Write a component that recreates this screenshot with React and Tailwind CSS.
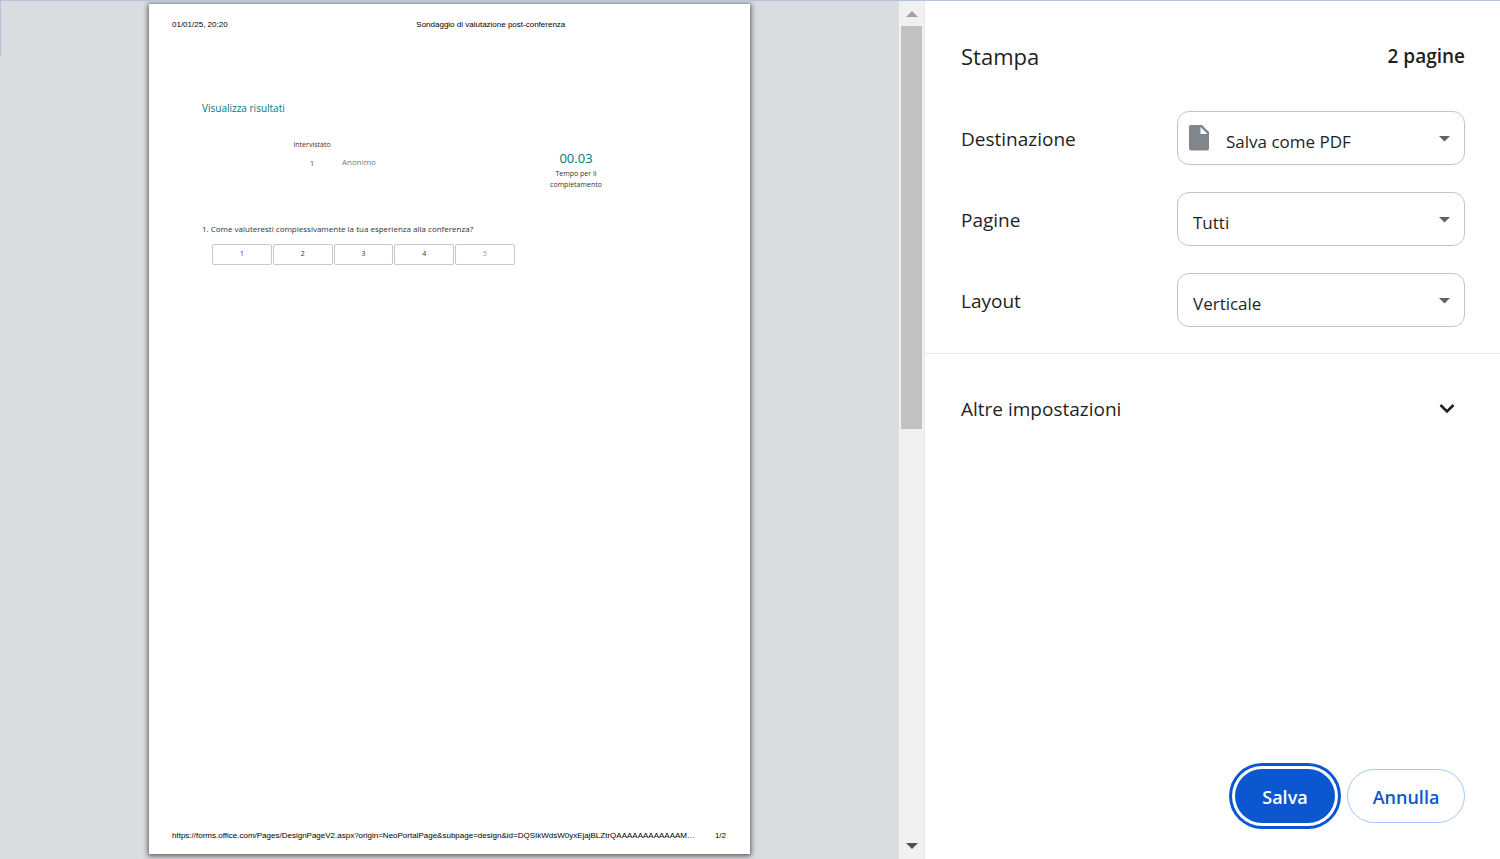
import React, { useState } from "react";

const ratings = ["1", "2", "3", "4", "5"];

const FileIcon = () => (
  <svg width="20" height="26" viewBox="0 0 20 26" fill="#80868b">
    <path
      fillRule="evenodd"
      d="M2 0H13L20 7V23.500Q20 25.500 18 25.500H2Q0 25.500 0 23.500V2Q0 0 2 0ZM11.500 2V9H18.500Z"
    />
  </svg>
);

const Field = ({ id, label, options, icon }) => {
  const [value, setValue] = useState(options[0]);

  return (
    <div className="flex items-center justify-between">
      <label htmlFor={id} className="pt-[2px] text-[19px] leading-7">
        {label}
      </label>
      <div className="relative w-72">
        <select
          id={id}
          value={value}
          onChange={(e) => setValue(e.target.value)}
          className={
            icon
              ? "block h-[54px] w-full appearance-none rounded-xl border border-[#c4c4c4] bg-white pt-[7px] pr-10 pl-12 text-[17px]"
              : "block h-[54px] w-full appearance-none rounded-xl border border-[#c4c4c4] bg-white pt-[7px] pr-10 pl-[15px] text-[17px]"
          }
        >
          {options.map((option) => (
            <option key={option}>{option}</option>
          ))}
        </select>
        {icon ? (
          <div className="pointer-events-none absolute top-[14px] left-3">
            {icon}
          </div>
        ) : null}
        <svg
          className="pointer-events-none absolute top-[25px] right-[15px]"
          width="11"
          height="6"
          viewBox="0 0 11 6"
        >
          <path d="M0 0H11L5.500 5.500Z" fill="#5f6368" />
        </svg>
      </div>
    </div>
  );
};

const Paper = () => (
  <article className="flex w-[601px] flex-col bg-white shadow-[0_1px_5px_1px_rgba(0,0,0,0.6)]">
    <header className="flex gap-1 pt-[15px] pl-[23px] font-['Liberation_Sans',sans-serif] text-[8px] leading-3 text-black">
      <span>01/01/25, 20:20</span>
      <span className="flex-1 text-center">
        Sondaggio di valutazione post-conferenza
      </span>
    </header>
    <div className="flex-1 px-[53px] pt-[69px] text-[#333333]">
      <h2 className="text-[10px] leading-4 text-[#03787c]">
        Visualizza risultati
      </h2>
      <div className="mt-6 flex justify-between pr-[85px] pl-20">
        <div className="flex">
          <div className="w-[60px] text-center">
            <p className="text-[7px] leading-[10px]">Intervistato</p>
            <p className="mt-2 text-[8px] leading-[10px] text-[#666666]">1</p>
          </div>
          <p className="mt-4 text-[8px] leading-3 text-[#777777]">Anonimo</p>
        </div>
        <div className="mt-2 w-[72px] text-center">
          <p className="text-[13px] leading-5 text-[#03787c]">00.03</p>
          <p className="text-[7px] leading-[11px]">
            Tempo per il completamento
          </p>
        </div>
      </div>
      <div className="mt-[31px]">
        <p className="text-[8px] leading-4">
          1. Come valuteresti complessivamente la tua esperienza alla
          conferenza?
        </p>
        <div className="mt-[7px] ml-[10px] grid w-[303px] grid-cols-5 gap-px">
          {ratings.map((rating) => (
            <button
              key={rating}
              type="button"
              className={
                rating === "5"
                  ? "h-[21px] rounded-[2px] border border-[#c8c8c8] text-[7px] text-[#999999]"
                  : "h-[21px] rounded-[2px] border border-[#c8c8c8] text-[7px] text-[#333333]"
              }
            >
              {rating}
            </button>
          ))}
        </div>
      </div>
    </div>
    <footer className="flex justify-between pr-6 pb-3 pl-[23px] font-['Liberation_Sans',sans-serif] text-[8px] leading-3 text-black">
      <span>
        https://forms.office.com/Pages/DesignPageV2.aspx?origin=NeoPortalPage&amp;subpage=design&amp;id=DQSIkWdsW0yxEjajBLZtrQAAAAAAAAAAAAM…
      </span>
      <span>1/2</span>
    </footer>
  </article>
);

const Scrollbar = () => (
  <div className="flex w-[26px] flex-col items-center border-r border-[#e8eaed] bg-[#f1f1f1] pt-[10px] pb-[10px]">
    <svg width="12" height="6" viewBox="0 0 12 6">
      <path d="M0 6L6 0L12 6Z" fill="#a3a3a3" />
    </svg>
    <div className="mt-[9px] min-h-0 flex-1 self-stretch px-[2px]">
      <div className="h-[49.3%] bg-[#c1c1c1]" />
    </div>
    <svg width="12" height="6" viewBox="0 0 12 6">
      <path d="M0 0H12L6 6Z" fill="#505050" />
    </svg>
  </div>
);

const App = () => {
  const [open, setOpen] = useState(false);

  return (
    <div className="relative flex h-screen border-t border-[#b4c2dc] bg-white font-['Open_Sans',sans-serif] text-[#1f1f1f]">
      <div className="absolute top-0 left-0 h-14 w-px bg-[#b4c2dc]" />
      <main className="flex flex-1 justify-center overflow-hidden bg-[#dadce0] pt-[3px] pb-[5px]">
        <Paper />
      </main>
      <Scrollbar />
      <aside className="flex w-[575px] flex-col">
        <div className="flex items-center justify-between pt-[35px] pr-[35px] pl-9">
          <h1 className="text-[22px] leading-10">Stampa</h1>
          <span className="text-[19px] leading-10 font-semibold">
            2 pagine
          </span>
        </div>
        <form className="mt-[35px] flex flex-col gap-[27px] border-b border-[#e8eaed] pr-[35px] pb-[26px] pl-9">
          <Field
            id="destination"
            label="Destinazione"
            options={["Salva come PDF"]}
            icon={<FileIcon />}
          />
          <Field
            id="pages"
            label="Pagine"
            options={["Tutti", "Solo pagine dispari", "Solo pagine pari"]}
          />
          <Field
            id="layout"
            label="Layout"
            options={["Verticale", "Orizzontale"]}
          />
        </form>
        <button
          type="button"
          aria-expanded={open}
          onClick={() => setOpen(!open)}
          className="mt-[27px] flex h-14 cursor-pointer items-center justify-between pr-[45px] pl-9 text-[19px]"
        >
          Altre impostazioni
          <svg width="16" height="10" viewBox="0 0 16 10">
            <path
              d="M1.500 1L8 7.500L14.500 1"
              fill="none"
              stroke="#1f1f1f"
              strokeWidth="2.500"
            />
          </svg>
        </button>
        <div className="mt-auto flex justify-end gap-3 pr-[35px] pb-9">
          <button
            type="button"
            className="h-[54px] w-[100px] cursor-pointer rounded-full bg-[#0b57d0] pt-[2px] text-[18px] font-semibold text-white ring-3 ring-[#0b57d0] ring-offset-3 ring-offset-white"
          >
            Salva
          </button>
          <button
            type="button"
            className="h-[54px] w-[118px] cursor-pointer rounded-full border border-[#a8c7fa] pt-[2px] text-[18px] font-semibold text-[#0b57d0]"
          >
            Annulla
          </button>
        </div>
      </aside>
    </div>
  );
};

export default App;
